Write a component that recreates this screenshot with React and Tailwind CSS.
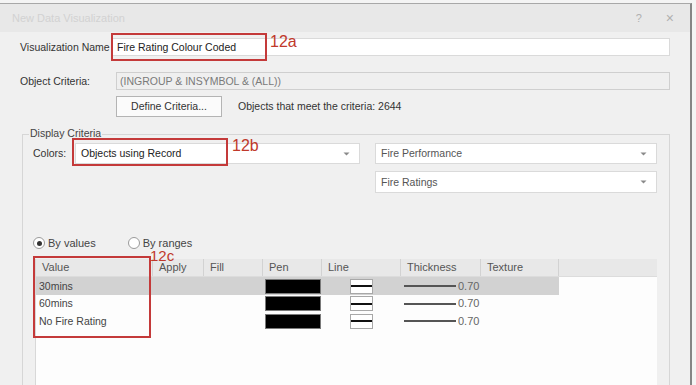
import React from "react";

function Caret() {
  return (
    <svg width="7" height="4" viewBox="0 0 7 4" className="shrink-0">
      <path d="M0.5 0.5 L6.5 0.5 L3.5 3.5 Z" fill="#8a8a8a" />
    </svg>
  );
}

function Dropdown({ text, className, textClass }) {
  return (
    <div className={"h-full bg-white border border-[#dadada] flex items-center justify-between pl-[5px] pr-[9px] " + className}>
      <span className={textClass}>{text}</span>
      <Caret />
    </div>
  );
}

function Radio({ checked, label, className }) {
  return (
    <div className={"flex items-center " + className}>
      <div className="w-[12px] h-[12px] rounded-full border border-[#9a9a9a] bg-white flex items-center justify-center">
        {checked && <div className="w-[5px] h-[5px] rounded-full bg-[#333]" />}
      </div>
      <span className="ml-[3px] text-[#444] text-[11px]">{label}</span>
    </div>
  );
}

const cols = [
  { name: "Value", w: 117 },
  { name: "Apply", w: 51 },
  { name: "Fill", w: 59 },
  { name: "Pen", w: 59 },
  { name: "Line", w: 79 },
  { name: "Thickness", w: 80 },
  { name: "Texture", w: 78 },
];

const rows = [
  { v: "30mins", h: "h-[18px]", sel: true },
  { v: "60mins", h: "h-[17px]", sel: false },
  { v: "No Fire Rating", h: "h-[18px]", sel: false },
];

function Row({ r }) {
  return (
    <div className={"flex items-center " + r.h}>
      <div className={"flex h-full items-center " + (r.sel ? "bg-[#d2d2d2]" : "")}>
        <div className="w-[117px] pl-[3px] text-[#444]">{r.v}</div>
        <div className="w-[51px]" />
        <div className="w-[59px]" />
        <div className="w-[59px] h-full flex items-center pl-[2px]">
          <div className="w-[56px] h-[15px] bg-black border border-[#7a7a7a]" />
        </div>
        <div className="w-[79px] h-full flex items-center pl-[28px]">
          <div className="w-[23px] h-[15px] bg-white border border-[#a8a8a8] flex flex-col justify-center">
            <div className="h-[2px] bg-[#111]" />
          </div>
        </div>
        <div className="w-[80px] h-full flex items-center pl-[3px]">
          <div className="w-[52px] h-[2px] bg-[#555]" />
          <span className="ml-[2px] text-[#666] text-[11px]">0.70</span>
        </div>
        <div className="w-[78px]" />
      </div>
    </div>
  );
}

export default function App() {
  return (
    <div className="w-[696px] h-[385px] overflow-hidden bg-[#f4f4f4] font-['Liberation_Sans',Arial,sans-serif] text-[10.5px] text-[#333] leading-none">
      <div className="mt-[3px] w-[692px] h-[400px] border-t border-t-[#a8a8a8] border-r-2 border-r-[#858585] bg-[#f0f0f0] flex flex-col">
        {/* title bar */}
        <div className="h-[28px] bg-[#e8e8e8] flex items-center pl-[12px] pr-[16px]">
          <span className="text-[#d2d2d2] text-[11px] flex-1">New Data Visualization</span>
          <span className="text-[#b0b0b0] text-[11px] mr-[24px]">?</span>
          <span className="text-[#b0b0b0] text-[14px]">×</span>
        </div>

        {/* Visualization name */}
        <div className="mt-[6px] h-[18px] flex items-center">
          <div className="w-[111px] pl-[20px] text-[#333]">Visualization Name</div>
          <div className="relative w-[559px] h-full bg-white border border-[#dadada] flex items-center pl-[5px] text-[#222]">
            Fire Rating Colour Coded
            <div className="absolute left-[-1px] top-[-6px] w-[156px] h-[28px] border-2 border-[#c43a3a]" />
            <span className="absolute left-[158px] top-[-5px] text-[16px] text-[#c0392b]">12a</span>
          </div>
        </div>

        {/* Object criteria */}
        <div className="mt-[16px] h-[18px] flex items-center">
          <div className="w-[116px] pl-[20px] text-[#333]">Object Criteria:</div>
          <div className="w-[554px] h-full bg-[#efefef] border border-[#cfcfcf] flex items-center pl-[3px] text-[#7a7a7a]">
            (INGROUP &amp; INSYMBOL &amp; (ALL))
          </div>
        </div>

        {/* Define criteria */}
        <div className="mt-[6px] h-[21px] flex items-center">
          <div className="ml-[116px] w-[106px] h-full bg-[#fbfbfb] border border-[#b4b4b4] flex items-center justify-center text-[#333]">
            Define Criteria...
          </div>
          <span className="ml-[16px] text-[#333]">Objects that meet the criteria: 2644</span>
        </div>

        {/* Display criteria group */}
        <div className="relative mt-[17px] ml-[22px] w-[648px] h-[260px] border border-[#d6d6d6] pl-[10px] pr-[12px]">
          <span className="absolute left-[6px] top-[-7px] bg-[#f0f0f0] px-[1px] text-[#444]">Display Criteria</span>

          <div className="mt-[8px] flex">
            <div className="h-[21px] flex items-center">
              <span className="w-[42px] text-[#333]">Colors:</span>
              <div className="relative h-full w-[285px]">
                <Dropdown text="Objects using Record" className="w-full" textClass="text-[#222]" />
                <div className="absolute left-[-3px] top-[-5px] w-[156px] h-[28px] border-2 border-[#c43a3a]" />
                <span className="absolute left-[157px] top-[-5px] text-[16px] text-[#c0392b]">12b</span>
              </div>
            </div>
            <div className="ml-[15px] flex flex-col gap-[7px]">
              <div className="h-[21px] w-[282px]">
                <Dropdown text="Fire Performance" className="w-full" textClass="text-[#555]" />
              </div>
              <div className="h-[22px] w-[282px]">
                <Dropdown text="Fire Ratings" className="w-full" textClass="text-[#555]" />
              </div>
            </div>
          </div>

          <div className="mt-[44px] h-[12px] flex items-center">
            <Radio checked label="By values" className="" />
            <Radio label="By ranges" className="ml-[32px]" />
          </div>

          <div className="relative mt-[10px] ml-[2px] w-[622px] h-[200px] bg-[#fdfdfd] border-l border-[#d8d8d8]">
            <div className="h-[18px] bg-[#e8e8e8] border-b border-[#dcdcdc] flex">
              {cols.map((c) => (
                <div
                  key={c.name}
                  style={{ width: c.w }}
                  className="h-full border-r border-[#d2d2d2] flex items-center pl-[6px] text-[#555] text-[11px]"
                >
                  <span>{c.name}</span>
                </div>
              ))}
            </div>
            {rows.map((r) => (
              <Row key={r.v} r={r} />
            ))}
            <div className="absolute left-[-3px] top-[-3px] w-[118px] h-[82px] border-2 border-[#c43a3a]" />
            <span className="absolute left-[114px] top-[-10px] text-[15px] leading-[13px] text-[#c0392b]">12c</span>
          </div>
        </div>
      </div>
    </div>
  );
}
